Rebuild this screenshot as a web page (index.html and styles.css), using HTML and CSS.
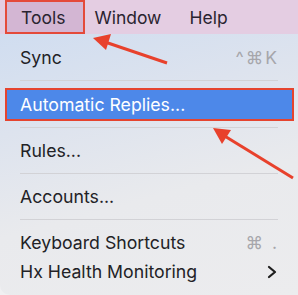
FILE: index.html
```html
<!DOCTYPE html>
<html>
<head>
<meta charset="utf-8">
<link rel="stylesheet" href="styles.css">
</head>
<body>
<div class="screen">
  <div class="menubar">
    <span class="mb-item mb-active">Tools</span>
    <span class="mb-item">Window</span>
    <span class="mb-item">Help</span>
  </div>
  <div class="menu">
    <div class="row"><span>Sync</span><span class="key">^&#8984;K</span></div>
    <div class="sep"></div>
    <div class="row hl"><span>Automatic Replies...</span></div>
    <div class="sep after-hl"></div>
    <div class="row"><span>Rules...</span></div>
    <div class="sep"></div>
    <div class="row"><span>Accounts...</span></div>
    <div class="sep"></div>
    <div class="row"><span>Keyboard Shortcuts</span><span class="key">&#8984; .</span></div>
    <div class="row"><span>Hx Health Monitoring</span><svg class="chev" width="10" height="14" viewBox="0 0 10 14"><path d="M2 2 L8 7 L2 12" fill="none" stroke="#1e1e1e" stroke-width="2.2" stroke-linecap="round" stroke-linejoin="round"/></svg></div>
  </div>
  <svg class="arrows" width="298" height="295" viewBox="0 0 298 295">
    <line x1="167" y1="63" x2="105" y2="42" stroke="#e8412c" stroke-width="3"/>
    <polygon points="93,38 111,34 106,50" fill="#e8412c"/>
    <line x1="293" y1="178" x2="223" y2="135" stroke="#e8412c" stroke-width="3"/>
    <polygon points="213,128 231,130 222,144" fill="#e8412c"/>
  </svg>
</div>
</body>
</html>
```

FILE: styles.css
```css
html, body {
  margin: 0;
  padding: 0;
}
body {
  width: 298px;
  height: 295px;
  overflow: hidden;
  font-family: "Inter", "Liberation Sans", sans-serif;
  color: #222226;
}
.screen {
  position: relative;
  width: 298px;
  height: 295px;
  background: #f0f0f2;
}
.menubar {
  height: 34px;
  background: #e4cde2;
  display: flex;
  align-items: stretch;
  font-size: 17.5px;
  color: #2a2430;
}
.mb-item {
  display: flex;
  align-items: center;
  padding: 0 14px;
}
.mb-item:nth-child(2) {
  padding-left: 9px;
  padding-right: 14px;
}
.mb-active {
  margin-left: 5px;
  padding: 0 18px 0 14px;
  background: #d3b6d3;
  border: 2px solid #e44a3a;
  box-sizing: border-box;
}
.menu {
  height: 261px;
  padding-top: 9px;
  box-sizing: border-box;
  background: linear-gradient(165deg, #d0ddf0 0%, #dde3ee 30%, #e9eaed 60%, #ececee 100%);
  border-bottom-left-radius: 10px;
  font-size: 17.7px;
}
.row {
  height: 29px;
  display: flex;
  align-items: center;
  justify-content: space-between;
  padding: 0 21px 0 20px;
}
.key {
  color: #a6a6ab;
  font-size: 17.5px;
  letter-spacing: 2px;
  margin-right: -2px;
}
.sep {
  height: 1px;
  margin: 8px 20px;
  background: #d2d2d6;
}
.sep + .hl {
  margin-top: -1px;
}
.hl {
  height: 33px;
  box-sizing: border-box;
  margin: 0 4px 0 5px;
  padding-left: 13px;
  background: #4d88e9;
  border: 2px solid #e5442f;
  color: #ffffff;
}
.after-hl {
  margin-top: 6px;
  margin-bottom: 8px;
}
.arrows {
  position: absolute;
  left: 0;
  top: 0;
}
```
